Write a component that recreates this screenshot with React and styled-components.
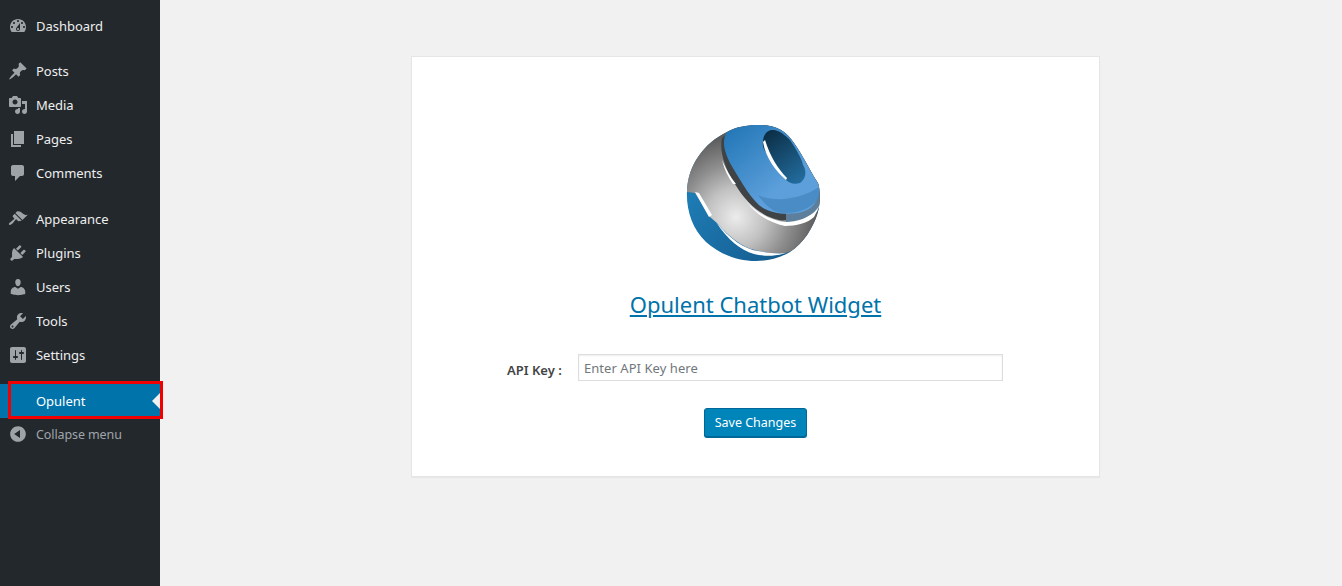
import React from 'react';
import styled, { createGlobalStyle } from 'styled-components';

const GlobalStyle = createGlobalStyle`
  html, body {
    margin: 0;
    height: 100%;
    overflow: hidden;
    background: #f1f1f1;
    font-family: "Noto Sans", "Open Sans", sans-serif;
  }
`;

const Layout = styled.div`
  display: flex;
  height: 586px;
`;

const Sidebar = styled.nav`
  position: relative;
  width: 160px;
  flex-shrink: 0;
  background: #23282d;
  padding-top: 9px;
  box-sizing: border-box;
`;

const MenuGroup = styled.ul`
  list-style: none;
  margin: 0 0 ${props => props.$gap}px;
  padding: 0;
`;

const MenuItem = styled.li`
  position: relative;
  display: flex;
  align-items: center;
  height: 34px;
  padding-left: 8px;
  font-size: 13px;
  letter-spacing: -0.03px;
  background: ${props => (props.$active ? '#0073aa' : 'transparent')};
  color: ${props => (props.$active ? '#fff' : '#eee')};
`;

const IconSlot = styled.span`
  display: flex;
  width: 20px;
  height: 20px;
  margin-right: 8px;
  flex-shrink: 0;
  color: #9ea3a8;
`;

const ActiveArrow = styled.span`
  position: absolute;
  right: 0;
  top: 50%;
  margin-top: -8px;
  border: 8px solid transparent;
  border-right-color: #f1f1f1;
  border-left-width: 0;
`;

const Highlight = styled.span`
  position: absolute;
  left: 8px;
  top: -3px;
  width: 155px;
  height: 38px;
  box-sizing: border-box;
  border: 3px solid #f00000;
`;

const CollapseRow = styled.div`
  display: flex;
  align-items: center;
  height: 32px;
  padding-left: 8px;
  color: #a0a5aa;
  font-size: 12.5px;
  letter-spacing: -0.1px;
`;

const Main = styled.main`
  flex: 1;
  padding: 56px 0 0 251px;
`;

const Card = styled.section`
  width: 689px;
  height: 421px;
  box-sizing: border-box;
  background: #fff;
  border: 1px solid #e5e5e5;
  box-shadow: 0 1px 1px rgba(0, 0, 0, 0.04);
  display: flex;
  flex-direction: column;
  align-items: center;
  padding-top: 68px;
`;

const Logo = styled.svg`
  display: block;
  width: 134px;
  height: 136px;
  margin-right: 5px;
`;

const Title = styled.a`
  margin-top: 28px;
  font-size: 22px;
  line-height: 30px;
  color: #0073aa;
  text-decoration: underline;
`;

const FieldRow = styled.div`
  display: flex;
  align-items: center;
  align-self: flex-start;
  margin: 35px 0 0 95px;
`;

const Label = styled.label`
  width: 71px;
  font-size: 13px;
  font-weight: 600;
  color: #444;
  padding-top: 5px;
`;

const KeyInput = styled.input`
  width: 425px;
  height: 27px;
  box-sizing: border-box;
  padding: 0 5px;
  border: 1px solid #ddd;
  box-shadow: inset 0 1px 2px rgba(0, 0, 0, 0.07);
  font-family: inherit;
  font-size: 13px;
  letter-spacing: 0.05px;
  outline: none;
  &::placeholder {
    color: #72777c;
    opacity: 1;
  }
`;

const SaveButton = styled.button`
  margin-top: 27px;
  width: 103px;
  height: 29px;
  box-sizing: border-box;
  padding: 0 0 1px;
  border: 1px solid #006799;
  border-radius: 3px;
  background: #0085ba;
  box-shadow: 0 1px 0 #006799;
  color: #fff;
  font-family: inherit;
  font-size: 12.5px;
`;

const icons = {
  dashboard:
    'M3.76 16h12.48c1.1-1.37 1.76-3.11 1.76-5 0-4.42-3.58-8-8-8s-8 3.58-8 8c0 1.89.66 3.63 1.76 5zM10 4c.55 0 1 .45 1 1s-.45 1-1 1-1-.45-1-1 .45-1 1-1zM6 6c.55 0 1 .45 1 1s-.45 1-1 1-1-.45-1-1 .45-1 1-1zm8 0c.55 0 1 .45 1 1s-.45 1-1 1-1-.45-1-1 .45-1 1-1zm-5.37 5.55L12 7v6c0 1.1-.9 2-2 2s-2-.9-2-2c0-.57.24-1.08.63-1.45zM4 10c.55 0 1 .45 1 1s-.45 1-1 1-1-.45-1-1 .45-1 1-1zm12 0c.55 0 1 .45 1 1s-.45 1-1 1-1-.45-1-1 .45-1 1-1zm-5 3c0-.55-.45-1-1-1s-1 .45-1 1 .45 1 1 1 1-.45 1-1z',
  post:
    'M10.44 3.02l1.82-1.82 6.36 6.35-1.83 1.82c-1.05-.68-2.48-.57-3.41.36l-.75.75c-.92.93-1.04 2.35-.35 3.41l-1.83 1.82-2.41-2.41-2.8 2.79c-.42.42-3.38 2.71-3.8 2.29s1.86-3.39 2.28-3.81l2.79-2.79L4.1 9.36l1.83-1.82c1.05.69 2.48.57 3.4-.36l.75-.75c.93-.92 1.05-2.35.36-3.41z',
  media:
    'M13 11V4c0-.55-.45-1-1-1h-1.67L9 1H5L3.67 3H2c-.55 0-1 .45-1 1v7c0 .55.45 1 1 1h10c.55 0 1-.45 1-1zM7 4.5c1.38 0 2.5 1.12 2.5 2.5S8.38 9.5 7 9.5 4.5 8.38 4.5 7 5.62 4.5 7 4.5zM14 6h5v10.5c0 1.38-1.12 2.5-2.5 2.5S14 17.88 14 16.5s1.12-2.5 2.5-2.5c.17 0 .34.02.5.05V9h-3V6zm-4 8.05V13h2v3.5c0 1.38-1.12 2.5-2.5 2.5S7 17.88 7 16.5 8.12 14 9.5 14c.17 0 .34.02.5.05z',
  page: 'M6 15V2h10v13H6zm-1 1h8v2H3V5h2v11z',
  comments:
    'M5 2h9c1.1 0 2 .9 2 2v7c0 1.1-.9 2-2 2h-2l-5 5v-5H5c-1.1 0-2-.9-2-2V4c0-1.1.9-2 2-2z',
  appearance:
    'M14.48 11.06L7.41 3.99l1.5-1.5c.5-.56 2.3-.47 3.51.32 1.21.8 1.43 1.28 2.91 2.1 1.18.64 2.45 1.26 4.45.85l-5.3 5.3zm-.71.71L6.7 4.7 4.93 6.47c-.39.39-.39 1.02 0 1.41l1.06 1.06c.39.39.39 1.03 0 1.42-.6.6-1.43 1.11-2.21 1.69-.35.26-.7.53-1.01.84C1.43 13.23.4 14.84 1.2 15.64c.8.81 2.42-.22 3.76-1.57.31-.31.58-.66.84-1.01.58-.78 1.09-1.61 1.69-2.21.39-.39 1.02-.39 1.41 0l1.06 1.06c.39.39 1.02.39 1.41 0z',
  plugins:
    'M13.11 4.36L9.87 7.6 8 5.73l3.24-3.24c.35-.34 1.05-.2 1.56.32.52.51.66 1.21.31 1.55zm-8 1.77l.91-1.12 9.01 9.01-1.19.84c-.71.71-2.63 1.16-3.82 1.16H6.14L4.9 17.26c-.59.59-1.54.59-2.12 0-.59-.58-.59-1.53 0-2.12l1.24-1.24v-3.88c0-1.13.4-3.19 1.09-3.89zm7.26 3.97l3.24-3.24c.34-.35 1.04-.21 1.55.31.52.51.66 1.21.31 1.55l-3.24 3.25z',
  users:
    'M10 9.25c-2.27 0-2.73-3.44-2.73-3.44C7 4.02 7.82 2 9.97 2c2.16 0 2.98 2.02 2.71 3.81 0 0-.41 3.44-2.68 3.44zm0 2.57L12.72 10c2.39 0 4.52 2.33 4.52 4.53v2.49s-3.65 1.13-7.24 1.13c-3.65 0-7.24-1.13-7.24-1.13v-2.49c0-2.25 1.94-4.48 4.47-4.48z',
  tools:
    'M16.68 9.77c-1.34 1.34-3.3 1.67-4.95.99l-5.41 6.52c-.99.99-2.59.99-3.58 0s-.99-2.59 0-3.57l6.52-5.42c-.68-1.65-.35-3.61.99-4.95 1.28-1.28 3.12-1.62 4.72-1.06l-2.89 2.89 2.82 2.82 2.86-2.87c.53 1.58.18 3.39-1.08 4.65zM3.81 16.21c.4.39 1.04.39 1.43 0 .4-.4.4-1.04 0-1.43-.39-.4-1.03-.4-1.43 0-.39.39-.39 1.03 0 1.43z',
  settings:
    'M18 16V4c0-1.1-.9-2-2-2H4c-1.1 0-2 .9-2 2v12c0 1.1.9 2 2 2h12c1.1 0 2-.9 2-2zM8 11h1c.55 0 1 .45 1 1s-.45 1-1 1H8v1.5c0 .28-.22.5-.5.5s-.5-.22-.5-.5V13H6c-.55 0-1-.45-1-1s.45-1 1-1h1V5.5c0-.28.22-.5.5-.5s.5.22.5.5V11zm5-2h-1c-.55 0-1-.45-1-1s.45-1 1-1h1V5.5c0-.28.22-.5.5-.5s.5.22.5.5V7h1c.55 0 1 .45 1 1s-.45 1-1 1h-1v5.5c0 .28-.22.5-.5.5s-.5-.22-.5-.5V9z',
  collapse:
    'M10 2.16c4.33 0 7.84 3.51 7.84 7.84s-3.51 7.84-7.84 7.84S2.16 14.33 2.16 10 5.71 2.16 10 2.16zm2 11.72V6.12L6.18 9.97z',
};

const Icon = ({ name }) => (
  <IconSlot>
    {name && (
      <svg viewBox="0 0 20 20" width="20" height="20" fill="currentColor">
        <path d={icons[name]} />
      </svg>
    )}
  </IconSlot>
);

const groups = [
  { gap: 11, items: [['dashboard', 'Dashboard']] },
  {
    gap: 12,
    items: [
      ['post', 'Posts'],
      ['media', 'Media'],
      ['page', 'Pages'],
      ['comments', 'Comments'],
    ],
  },
  {
    gap: 12,
    items: [
      ['appearance', 'Appearance'],
      ['plugins', 'Plugins'],
      ['users', 'Users'],
      ['tools', 'Tools'],
      ['settings', 'Settings'],
    ],
  },
];

const silhouette =
  'M41 7C50 2 60 0 72 0C90 0 100 6 108 18C118 32 124 46 132 58C135 66 134 82 131 90C127 102 118 118 104 127C92 134 80 136 70 136C50 136 32 128 20 117C6 104 0 84 1 66C2 40 18 18 41 7Z';

const OpulentLogo = () => (
  <Logo viewBox="0 0 134 136">
    <defs>
      <clipPath id="silhouette">
        <path d={silhouette} />
      </clipPath>
      <linearGradient id="baseBlue" x1="0" y1="0.4" x2="0.8" y2="1">
        <stop offset="0" stopColor="#1f7fb8" />
        <stop offset="1" stopColor="#14598c" />
      </linearGradient>
      <radialGradient id="steel" gradientUnits="userSpaceOnUse" cx="50" cy="92" r="82">
        <stop offset="0" stopColor="#ececec" />
        <stop offset="0.35" stopColor="#c2c2c2" />
        <stop offset="0.65" stopColor="#8e8e8e" />
        <stop offset="1" stopColor="#5a5a5a" />
      </radialGradient>
      <linearGradient id="ringBlue" x1="0" y1="0" x2="0.85" y2="1">
        <stop offset="0" stopColor="#1f74b4" />
        <stop offset="0.7" stopColor="#5c9fdb" />
        <stop offset="1" stopColor="#5c9fdb" />
      </linearGradient>
      <linearGradient id="holeBlue" x1="0.2" y1="0" x2="0.8" y2="1">
        <stop offset="0" stopColor="#0c2f47" />
        <stop offset="1" stopColor="#226c9e" />
      </linearGradient>
    </defs>
    <g clipPath="url(#silhouette)">
      <rect x="0" y="0" width="134" height="136" fill="url(#baseBlue)" />
      <path d="M40 -5L-5 30V66L9 68L24 92L31 98C45 114 58 123 69 125C80 128 90 129 100 128L140 112V-5Z" fill="url(#steel)" />
      <path d="M36 13C33 26 39 44 49 59C59 76 72 88 86 93C92 95 96 96 100 95L100 86L40 10Z" fill="#3f4345" />
      <path d="M100 86L134 68V84L128 90C120 95 110 97 100 97Z" fill="#5d7f9c" />
      <path d="M60 76C70 90 84 98 99 101C110 101 122 98 128 92L134 80L131 84C124 93 110 97 100 97C86 96 70 88 60 76Z" fill="#fff" />
      <path d="M36 35C40 44 44 52 50 59L47 59C42 52 38 44 36 35Z" fill="#fff" />
      <path d="M9 67L13 68L26 90L23 92Z" fill="#fff" />
      <path d="M30 97C44 114 58 124 72 126C82 128 92 129 100 128C88 132 76 131 68 129C54 125 42 115 30 97Z" fill="#fff" />
      <path
        d="M41 7C50 2 60 0 72 0C90 0 100 6 108 18C118 32 124 46 132 58C134 64 134 68 132 72C128 82 122 86 112 88C98 90 86 88 77 83C66 76 56 58 44 38C39 28 35 16 41 7Z"
        fill="url(#ringBlue)"
      />
      <path d="M72 70C90 78 115 74 133 62L133 72C126 84 112 88 100 88C90 89 80 82 72 70Z" fill="#3d80b8" opacity="0.6" />
      <path
        d="M77 17C77 10 81 5 86 5C92 4 99 10 104 15C110 24 116 34 117 40C121 46 120 54 114 58C108 60 103 58 99 54L82 30C79 26 76 22 77 17Z"
        fill="url(#holeBlue)"
      />
      <path d="M77 17L79 15C84 31 92 44 101 53L100 55C90 46 80 34 77 17Z" fill="#fff" />
    </g>
  </Logo>
);

export default function App() {
  return (
    <>
      <GlobalStyle />
      <Layout>
        <Sidebar>
          {groups.map(group => (
            <MenuGroup key={group.items[0][1]} $gap={group.gap}>
              {group.items.map(([icon, label]) => (
                <MenuItem key={label}>
                  <Icon name={icon} />
                  {label}
                </MenuItem>
              ))}
            </MenuGroup>
          ))}
          <MenuGroup $gap={0}>
            <MenuItem $active>
              <Icon />
              Opulent
              <ActiveArrow />
              <Highlight />
            </MenuItem>
          </MenuGroup>
          <CollapseRow>
            <Icon name="collapse" />
            Collapse menu
          </CollapseRow>
        </Sidebar>
        <Main>
          <Card>
            <OpulentLogo />
            <Title href="#">Opulent Chatbot Widget</Title>
            <FieldRow>
              <Label>API Key :</Label>
              <KeyInput placeholder="Enter API Key here" />
            </FieldRow>
            <SaveButton>Save Changes</SaveButton>
          </Card>
        </Main>
      </Layout>
    </>
  );
}
